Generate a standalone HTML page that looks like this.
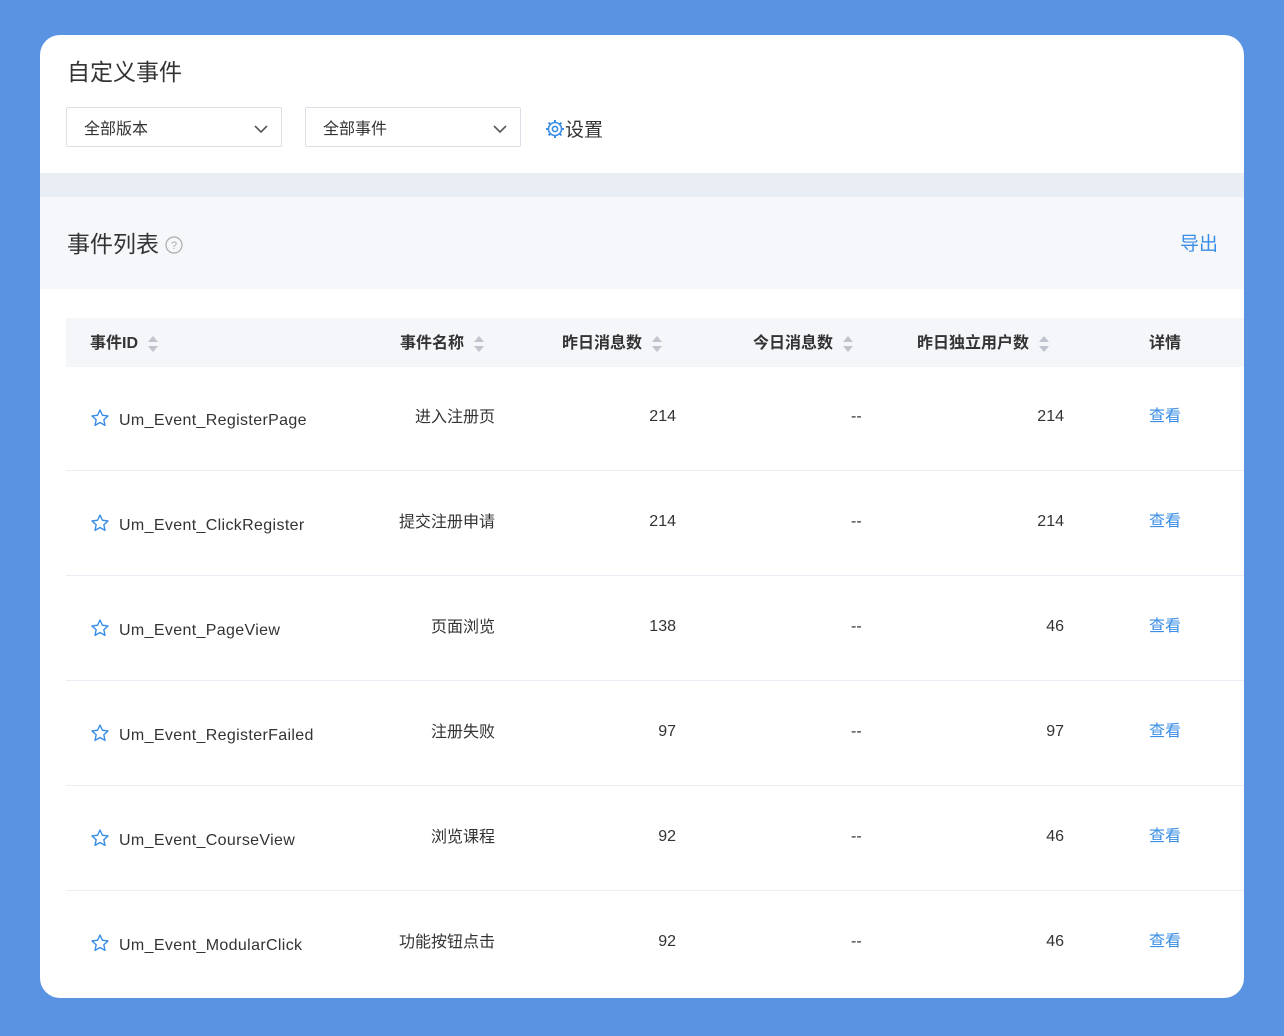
<!DOCTYPE html>
<html><head><meta charset="utf-8"><style>
*{margin:0;padding:0;box-sizing:border-box}
body{width:1284px;height:1036px;background:#5b93e3;font-family:"Liberation Sans","Noto Sans CJK SC",sans-serif;position:relative;overflow:hidden;color:#333}
.card{position:absolute;left:40px;top:35px;width:1204px;height:963px;background:#fff;border-radius:20px;overflow:hidden}
.a{position:absolute;white-space:nowrap}
.sel{position:absolute;top:72px;width:216px;height:40px;border:1px solid #dcdfe6;border-radius:2px;font-size:16px;line-height:44px;padding-left:17px;color:#333}
.sel svg{position:absolute;right:12px;top:16px}
.band{position:absolute;left:0;top:138px;width:1204px;height:24px;background:#e9edf4}
.sec{position:absolute;left:0;top:162px;width:1204px;height:92px;background:#f5f7fa}
.th{position:absolute;left:26px;top:283px;width:1178px;height:49px;background:#f4f6f9}
.h{position:absolute;top:294px;font-size:16px;font-weight:bold;color:#333}
.sort{display:inline-block;vertical-align:middle;margin-left:10px;width:10px;height:18px;position:relative}
.sort:before{content:"";position:absolute;left:0;top:1px;border:5px solid transparent;border-bottom:6px solid #c0c4cc;border-top:0}
.sort:after{content:"";position:absolute;left:0;top:11px;border:5px solid transparent;border-top:6px solid #c0c4cc;border-bottom:0}
.row{position:absolute;left:26px;width:1178px;height:1px;background:#ebeef5}
.c{position:absolute;font-size:16px;color:#333;white-space:nowrap}
.r{text-align:right}
.lk{color:#3a8ee6}
</style></head><body>
<div class="card">
<div class="a" style="left:27px;top:18px;font-size:23px;color:#333">自定义事件</div>
<div class="sel" style="left:26px">全部版本<svg width="16" height="10"><path d="M2 2l6 6 6-6" stroke="#555" stroke-width="1.6" fill="none"/></svg></div>
<div class="sel" style="left:265px">全部事件<svg width="16" height="10"><path d="M2 2l6 6 6-6" stroke="#555" stroke-width="1.6" fill="none"/></svg></div>
<div class="a" style="left:505px;top:80px;font-size:19px;color:#333"><svg width="20" height="20" style="vertical-align:-3px" viewBox="0 0 20 20"><circle cx="10" cy="10" r="6.5" fill="none" stroke="#3a8ee6" stroke-width="1.6"/><circle cx="10" cy="10" r="2.6" fill="none" stroke="#3a8ee6" stroke-width="1.6"/><g stroke="#3a8ee6" stroke-width="2"><path d="M10 1v3M10 16v3M1 10h3M16 10h3M3.6 3.6l2 2M14.4 14.4l2 2M3.6 16.4l2-2M14.4 5.6l2-2"/></g></svg>设置</div>
<div class="band"></div>
<div class="sec"></div>
<div class="a" style="left:27px;top:190px;font-size:23px;color:#333">事件列表 <svg width="18" height="18" style="vertical-align:-2px" viewBox="0 0 18 18"><circle cx="9" cy="9" r="8" fill="none" stroke="#aaa" stroke-width="1.2"/><text x="9" y="13" font-size="11" text-anchor="middle" fill="#aaa" font-family="Liberation Sans">?</text></svg></div>
<div class="a" style="left:1140px;top:194px;font-size:19px;color:#3a8ee6">导出</div>
<div class="th"></div>
<div class="h" style="left:50px">事件ID<span class="sort"></span></div>
<div class="h" style="left:360px">事件名称<span class="sort"></span></div>
<div class="h" style="left:522px">昨日消息数<span class="sort"></span></div>
<div class="h" style="left:713px">今日消息数<span class="sort"></span></div>
<div class="h" style="left:877px">昨日独立用户数<span class="sort"></span></div>
<div class="h" style="left:1109px">详情</div>
<div id="rows"></div>
</div>
<script>
var d=[["Um_Event_RegisterPage","进入注册页","214","214"],["Um_Event_ClickRegister","提交注册申请","214","214"],["Um_Event_PageView","页面浏览","138","46"],["Um_Event_RegisterFailed","注册失败","97","97"],["Um_Event_CourseView","浏览课程","92","46"],["Um_Event_ModularClick","功能按钮点击","92","46"]];
var h="";
d.forEach(function(r,i){var y=332+105*i;var t=y+38;
h+='<div class="c" style="left:50px;top:'+(t+3)+'px;letter-spacing:0.35px"><svg width="20" height="20" viewBox="0 0 24 24" style="vertical-align:-3px;margin-right:9px"><path d="M12 2.5l2.9 6.2 6.7.8-5 4.6 1.4 6.7L12 17.4l-6 3.4 1.4-6.7-5-4.6 6.7-.8z" fill="none" stroke="#3a8ee6" stroke-width="1.7" stroke-linejoin="round"/></svg>'+r[0]+'</div>';
h+='<div class="c r" style="right:749px;top:'+(t-2)+'px">'+r[1]+'</div>';
h+='<div class="c r" style="right:568px;top:'+(t+3)+'px">'+r[2]+'</div>';
h+='<div class="c" style="left:811px;top:'+(t+3)+'px">--</div>';
h+='<div class="c r" style="right:180px;top:'+(t+3)+'px">'+r[3]+'</div>';
h+='<div class="c lk" style="left:1109px;top:'+(t-3)+'px">查看</div>';
if(i<5)h+='<div class="row" style="top:'+(y+103)+'px"></div>';});
document.getElementById("rows").innerHTML=h;
</script>
</body></html>
